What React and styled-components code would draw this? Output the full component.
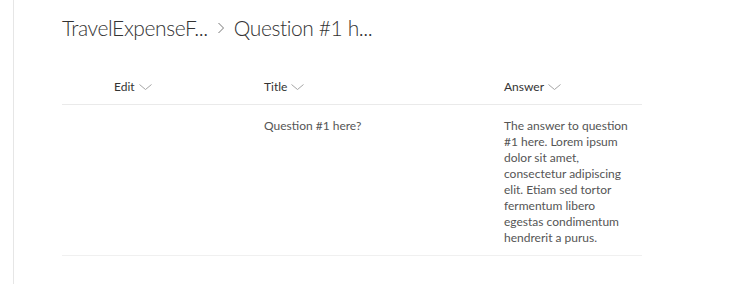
import React from "react";
import styled, { createGlobalStyle } from "styled-components";

const Global = createGlobalStyle`
  html, body { margin: 0; padding: 0; background: #fff; }
  body { font-family: Lato, "Open Sans", sans-serif; }
`;

const Page = styled.div`
  display: flex;
  min-height: 284px;
`;

const Rail = styled.div`
  width: 13px;
  flex: none;
  border-right: 1px solid #e6e6e6;
`;

const Content = styled.main`
  padding: 12px 0 0 48px;
  width: 580px;
`;

const Breadcrumb = styled.h1`
  margin: 0;
  display: flex;
  align-items: center;
  gap: 9px;
  font-size: 21px;
  letter-spacing: -0.4px;
  font-weight: 300;
  color: #333;
  line-height: 32px;
  height: 32px;
`;

const Crumb = styled.span`
  white-space: nowrap;
`;

const Sep = styled.span`
  display: inline-flex;
  color: #666;
`;

const Table = styled.div`
  margin-top: 19px;
`;

const Row = styled.div`
  display: grid;
  grid-template-columns: 52px 150px 240px 138px;
  border-bottom: 1px solid ${(p) => (p.$header ? "#eaeaea" : "#f0f0f0")};
  padding: ${(p) => (p.$header ? "16px 0 9px" : "13px 0 9px")};
`;

const HeadCell = styled.div`
  display: flex;
  align-items: center;
  gap: 4px;
  font-size: 12px;
  line-height: 16px;
  color: #333;
`;

const Cell = styled.div`
  font-size: 12px;
  line-height: 16px;
  color: #555;
  padding-right: ${(p) => p.$pr || 0}px;
`;

const Chevron = () => (
  <svg width="13" height="8" viewBox="0 0 13 8" aria-hidden="true">
    <path d="M0.5 1.5 L6.5 6.5 L12.5 1.5" fill="none" stroke="#a6a6a6" strokeWidth="1" />
  </svg>
);

const CrumbChevron = () => (
  <svg width="8" height="14" viewBox="0 0 8 14" aria-hidden="true">
    <path d="M1.5 2 L6.5 7 L1.5 12" fill="none" stroke="#777" strokeWidth="1" />
  </svg>
);

export default function App() {
  return (
    <>
      <Global />
      <Page>
        <Rail />
        <Content>
          <Breadcrumb>
            <Crumb>TravelExpenseF...</Crumb>
            <Sep><CrumbChevron /></Sep>
            <Crumb>Question #1 h...</Crumb>
          </Breadcrumb>
          <Table>
            <Row $header>
              <div />
              <HeadCell>Edit <Chevron /></HeadCell>
              <HeadCell>Title <Chevron /></HeadCell>
              <HeadCell>Answer <Chevron /></HeadCell>
            </Row>
            <Row>
              <div />
              <div />
              <Cell>Question #1 here?</Cell>
              <Cell $pr={7}>
                The answer to question #1 here. Lorem ipsum dolor sit amet,
                consectetur adipiscing elit. Etiam sed tortor fermentum libero
                egestas condimentum hendrerit a purus.
              </Cell>
            </Row>
          </Table>
        </Content>
      </Page>
    </>
  );
}
